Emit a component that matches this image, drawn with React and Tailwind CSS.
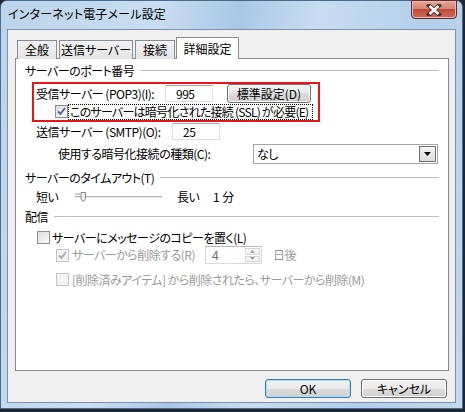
import React from "react";

const F = "font-['Noto_Sans_CJK_JP','Liberation_Sans',sans-serif] [font-feature-settings:'palt']";

function Check({ checked, disabled }) {
  return (
    <div
      className={`w-[13px] h-[13px] shrink-0 border flex items-center justify-center ${
        disabled ? "border-[#c4c4c4] bg-[#f4f4f4]" : "border-[#8e8f8f] bg-[linear-gradient(135deg,#dcdcdc,#fbfbfb)]"
      }`}
    >
      {checked && (
        <svg width="9" height="9" viewBox="0 0 9 9">
          <path
            d="M1 4.5 L3.5 7 L8 1"
            fill="none"
            stroke={disabled ? "#a8a8a8" : "#4a5f97"}
            strokeWidth="1.8"
          />
        </svg>
      )}
    </div>
  );
}

function Header({ text }) {
  return (
    <div className="h-[16px] flex items-center">
      <span className="text-[12px] leading-none text-black whitespace-nowrap">{text}</span>
      <div className="flex-1 ml-[6px] h-[2px] border-t border-[#c0c0c0] border-b-white border-b" />
    </div>
  );
}

function TextBox({ w, h, value, disabled }) {
  return (
    <div
      className={`${w} ${h} shrink-0 border border-[#dbdfe6] border-t-[#abadb3] bg-white flex items-center pl-[10px] text-[12px] leading-none ${
        disabled ? "text-[#6d6d6d]" : "text-black"
      }`}
    >
      {value}
    </div>
  );
}

function Btn({ children, w, def }) {
  return (
    <div
      className={`${w} h-[19px] shrink-0 whitespace-nowrap rounded-[3px] border ${
        def ? "border-[#3c7fb1] shadow-[inset_0_0_0_1px_#a8dcf5]" : "border-[#707070] shadow-[inset_0_0_0_1px_#fcfcfc]"
      } bg-[linear-gradient(#f2f2f2_0%,#ebebeb_50%,#dddddd_50%,#cfcfcf_100%)] flex items-center justify-center text-[12px] leading-none text-black tracking-normal`}
    >
      {children}
    </div>
  );
}

const TABS = [
  ["全般", "w-[40px]"],
  ["送信サーバー", "w-[74px]"],
  ["接続", "w-[40px]"],
];

export default function App() {
  return (
    <div className={`${F} w-[465px] h-[412px] overflow-hidden bg-[#1d2733]`}>
      <div className="w-[463px] h-[409px] rounded-t-[7px] border border-[#4e6a8a] bg-[linear-gradient(100deg,#bcd4ec_0%,#c9def2_30%,#a9c8e6_45%,#c8ddf1_60%,#b3cfea_80%,#c2d8ee_100%)] flex flex-col">
        <div className="h-[28px] flex items-start justify-between pl-[7px] pr-[5px]">
          <span className="mt-[7px] text-[12px] leading-none text-black tracking-[0.2px] whitespace-nowrap">
            インターネット電子メール設定
          </span>
          <div className="mt-[-1px] w-[46px] h-[19px] rounded-b-[4px] border border-[#5d2e2e] bg-[linear-gradient(#e8a89a_0%,#d68473_45%,#c24a3a_50%,#d06a58_100%)] shadow-[inset_0_0_0_1px_#f0b8aa] flex items-center justify-center">
            <svg width="16" height="12" viewBox="0 0 16 12">
              <path d="M3 1.5 L13 10.5 M13 1.5 L3 10.5" stroke="#4a3030" strokeWidth="4.2" strokeLinecap="square" />
              <path d="M3.5 2 L12.5 10 M12.5 2 L3.5 10" stroke="#ffffff" strokeWidth="2.4" />
            </svg>
          </div>
        </div>
        <div className="mx-[6px] mb-[5px] flex-1 border border-[#7d93ad] bg-[#f0f0f0] flex flex-col pl-[7px] pt-[6px]">
          {/* tabs */}
          <div className="flex items-end h-[22px] pl-[2px] relative z-10">
            {TABS.map(([t, w], i) => (
              <div
                key={t}
                className={`${w} h-[19px] mb-[-1px] whitespace-nowrap border border-[#898c95] border-b-0 ${i ? "ml-[2px]" : ""} flex items-center justify-center text-[12px] leading-none text-black bg-[linear-gradient(#f2f2f2,#e4e4e4)]`}
              >
                {t}
              </div>
            ))}
            <div className="h-[22px] w-[63px] ml-[1px] mb-[-1px] border border-[#898c95] border-b-0 bg-white flex items-center justify-center text-[12px] leading-none text-black whitespace-nowrap">
              詳細設定
            </div>
          </div>
          <div className="w-[434px] h-[313px] border border-[#898c95] bg-white pl-[9px] pr-[9px] pt-[4px] text-[12px] leading-none text-black whitespace-nowrap tracking-[-0.5px]">
            <Header text="サーバーのポート番号" />
            <div className="mt-[3px] ml-[7px] w-[288px] h-[40px] border-2 border-[#e8141c]">
              <div className="h-[19px] flex items-center pl-[2px]">
                <span className="w-[129px] shrink-0">受信サーバー (POP3)(I):</span>
                <TextBox w="w-[48px]" h="h-[17px]" value="995" />
                <div className="ml-[14px]">
                  <Btn w="w-[84px]">標準設定(D)</Btn>
                </div>
              </div>
              <div className="h-[17px] flex items-center pl-[21px]">
                <Check checked />
                <span className="ml-[1px] w-[243px] shrink-0 px-[1px] py-[1px] tracking-[-0.75px] outline outline-1 outline-dotted outline-black">
                  このサーバーは暗号化された接続 (SSL) が必要(E)
                </span>
              </div>
            </div>
            <div className="mt-[1px] h-[17px] flex items-center pl-[11px]">
              <span className="w-[136px] shrink-0">送信サーバー (SMTP)(O):</span>
              <TextBox w="w-[48px]" h="h-[17px]" value="25" />
            </div>
            <div className="mt-[4px] h-[20px] flex items-center pl-[33px]">
              <span className="w-[195px] shrink-0">使用する暗号化接続の種類(C):</span>
              <div className="w-[185px] h-[20px] border border-[#a5a5a5] bg-white flex items-center justify-between pl-[3px] pr-[1px]">
                <span>なし</span>
                <div className="w-[17px] h-[16px] border border-[#707070] bg-[linear-gradient(#f4f4f4,#dcdcdc)] flex items-center justify-center">
                  <svg width="7" height="4" viewBox="0 0 7 4">
                    <path d="M0 0 H7 L3.5 4 Z" fill="#000" />
                  </svg>
                </div>
              </div>
            </div>
            <div className="mt-[6px]">
              <Header text="サーバーのタイムアウト(T)" />
            </div>
            <div className="mt-[3px] h-[16px] flex items-center pl-[11px]">
              <span className="w-[39px] shrink-0">短い</span>
              <svg width="90" height="12" viewBox="0 0 90 12" className="shrink-0">
                <rect x="0" y="5" width="87" height="1" fill="#b4b4b4" />
                <rect x="0" y="6" width="87" height="1" fill="#e6e6e6" />
                <path d="M0 3 H5" stroke="#a0a0a0" />
                <path d="M6 1.5 H10.5 V8 L8.25 10.5 L6 8 Z" fill="#f0f0f0" stroke="#8a8a8a" />
              </svg>
              <span className="ml-[12px] w-[36px] shrink-0">長い</span>
              <span className="tracking-normal">1 分</span>
            </div>
            <div className="mt-[4px]">
              <Header text="配信" />
            </div>
            <div className="mt-[4px] h-[17px] flex items-center pl-[12px]">
              <Check />
              <span className="ml-[2px]">サーバーにメッセージのコピーを置く(L)</span>
            </div>
            <div className="h-[18px] flex items-center pl-[31px] text-[#9a9a9a]">
              <Check checked disabled />
              <span className="ml-[3px] w-[133px] shrink-0">サーバーから削除する(R)</span>
              <div className="w-[57px] h-[18px] shrink-0 border border-[#d5d9de] border-t-[#b8bcc2] bg-white flex items-center justify-between pl-[6px] pr-[1px]">
                <span className="text-[#6d6d6d]">4</span>
                <div className="w-[15px] h-[14px] flex flex-col gap-[1px]">
                  {[0, 1].map((k) => (
                    <div key={k} className="flex-1 border border-[#d6d6d6] bg-[#f4f4f4] flex items-center justify-center">
                      <svg width="5" height="3" viewBox="0 0 5 3">
                        <path d={k ? "M0 0 H5 L2.5 3 Z" : "M0 3 H5 L2.5 0 Z"} fill="#a0a0a0" />
                      </svg>
                    </div>
                  ))}
                </div>
              </div>
              <span className="ml-[11px]">日後</span>
            </div>
            <div className="mt-[7px] h-[17px] flex items-center pl-[31px] text-[#9a9a9a]">
              <Check disabled />
              <span className="ml-[3px]">[削除済みアイテム] から削除されたら、サーバーから削除(M)</span>
            </div>
          </div>
          <div className="mt-[8px] flex justify-end gap-[10px] pr-[8px]">
            <Btn w="w-[86px]" def>
              OK
            </Btn>
            <Btn w="w-[86px]">キャンセル</Btn>
          </div>
        </div>
      </div>
    </div>
  );
}
